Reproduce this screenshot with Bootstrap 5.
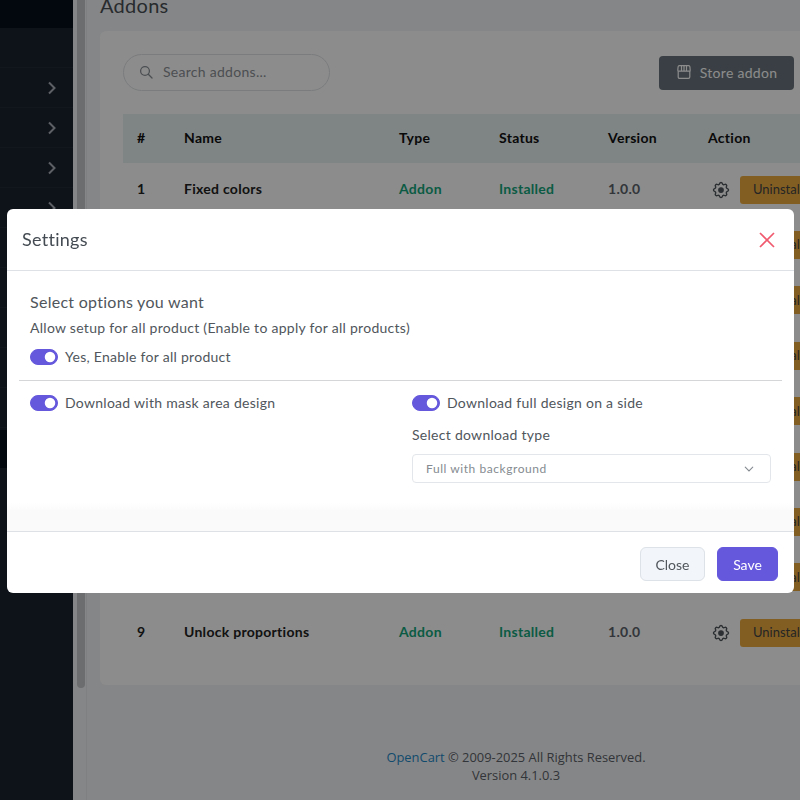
<!DOCTYPE html>
<html lang="en">
<head>
  <meta charset="UTF-8">
  <meta name="viewport" content="width=device-width, initial-scale=1">
  <title>Addons</title>
  <link href="https://cdn.jsdelivr.net/npm/bootstrap@5.3.2/dist/css/bootstrap.min.css" rel="stylesheet">
  <style>
    html, body { height: 800px; overflow: hidden; }
    body { font-family: "Lato", "Liberation Sans", sans-serif; letter-spacing: .28px; background: #f3f5f7; color: #3c4248; }

    .side-panel { width: 73px; height: 800px; background: #1a2330; }
    .side-top { height: 28px; background: #060d1b; }
    .side-row { height: 40px; border-bottom: 1px solid #212b38; padding-right: 16px; }
    .side-row.is-active { height: 38px; margin-top: 2px; background: #060d1b; border: 0; }

    .scroll-rail { width: 14px; height: 800px; background: #f3f5f7; border-right: 1px solid #e6e9ec; padding-left: 4px; }
    .scroll-thumb { width: 8px; height: 688px; background: #c4c6c8; border-radius: 0 0 4px 4px; }

    .page-main { padding-left: 13px; min-width: 0; }
    .page-title { font-size: 20px; font-weight: 400; line-height: 24px; margin: -7px 0 14px; color: #4a4f55; }

    .addon-card { width: 760px; height: 654px; background: #fff; border-radius: 6px; padding: 23px 0 0 23px; }
    .addon-tools { width: 671px; }
    .addon-search { width: 207px; height: 37px; border: 1px solid #dfe2e5; border-radius: 19px; padding: 0 0 2px 15px; font-size: 14px; color: #8b9096; }
    .addon-search span { margin-left: 2px; }
    .store-btn { width: 135px; height: 34px; margin: 2px 0 0 auto; padding-bottom: 2px; background: #69747c; color: #fff; border-radius: 4px; font-size: 14px; }

    .addon-table { width: 737px; margin-top: 23px; font-size: 14px; }
    .addon-head { height: 49px; margin-bottom: -1px; background: #e7f0f2; color: #111; font-weight: 700; padding-bottom: 3px; }
    .addon-row { height: 55.4px; font-weight: 700; color: #222; }
    .addon-row > div:not(.uninstall-btn) { padding-bottom: 2px; }
    .col-num { flex: none; width: 61px; padding-left: 14px; }
    .col-name { flex: none; width: 215px; }
    .col-type { flex: none; width: 100px; }
    .col-status { flex: none; width: 109px; }
    .col-ver { flex: none; width: 100px; }
    .is-green { color: #14a77c; }
    .is-muted { color: #5c636a; }
    .gear-icon { flex: none; margin-left: 3px; }
    .uninstall-btn { height: 28px; width: 90px; margin-left: 9px; padding-left: 13px; background: #eeac40; color: #444; border-radius: 3px; font-size: 13px; font-weight: 400; letter-spacing: 0; display: flex; align-items: center; flex: none; }

    .page-foot { width: 832px; margin-top: 63px; font-family: "Open Sans", sans-serif; letter-spacing: 0; font-size: 12.9px; line-height: 18px; text-align: center; color: #5c6168; }
    .page-foot a { color: #1e88c7; text-decoration: none; }

    .modal-backdrop.show { opacity: .45; }
    .settings-dialog { max-width: 787px; width: 787px; margin: 209px 0 0 7px; }
    .settings-box { height: 384px; border: 0; border-radius: 6px; }
    .settings-box .modal-header { height: 62px; padding: 0 15px; border-bottom: 1px solid #dee2e6; }
    .settings-box .modal-title { font-size: 18px; font-weight: 400; color: #444b52; }
    .settings-box .modal-body { padding: 0; flex: none; height: 260px; font-size: 14px; color: #50565c; background: linear-gradient(to bottom, #fff 232px, #fafafa 240px); }
    .settings-box .modal-footer { height: 62px; padding: 3px 16px 0 0; border-top: 1px solid #dee2e6; gap: 12px; }
    .settings-box .modal-footer > * { margin: 0; }

    .opts-top { padding: 21px 23px 0; }
    .opts-heading { font-size: 16px; line-height: 20px; margin: 0 0 6px; color: #50565c; }
    .opts-line { line-height: 20px; margin: 0 0 9px; }
    .opts-switch { display: flex; align-items: center; gap: 7px; margin: 0; padding: 0; min-height: 0; line-height: 20px; }
    .opts-switch .form-check-input { width: 28px; height: 16px; margin: 0; background-color: #6558dc; border-color: #6558dc; flex-shrink: 0; }
    .opts-rule { margin: 13px 12px 12px; border-color: #d4d6d8; opacity: 1; }
    .opts-cols { padding-left: 23px; }
    .opts-left { width: 382px; }
    .opts-right { width: 359px; }
    .opts-label { line-height: 20px; margin: 12px 0 9px; }
    .opts-select { width: 359px; height: 29px; font-size: 12px; letter-spacing: .56px; color: #858b91; padding: 0 14px 0 13px; border-color: #e3e6ea; border-radius: 4px; background-image: url("data:image/svg+xml,%3csvg xmlns='http://www.w3.org/2000/svg' viewBox='0 0 16 16'%3e%3cpath fill='none' stroke='%23858b91' stroke-linecap='round' stroke-width='1.5' d='M3 5.5l5 5 5-5'/%3e%3c/svg%3e"); background-position: right 15px center; background-size: 12px 12px; }
    .close-btn { width: 65px; height: 34px; padding: 0; font-size: 14px; background: #f2f5f9; border: 1px solid #dde2e8; color: #50565c; }
    .save-btn { width: 61px; height: 34px; padding: 0; font-size: 14px; background: #6558dc; border: 1px solid #6558dc; color: #fff; }
    .x-btn { background: none; border: 0; padding: 0; margin-right: 4px; line-height: 0; }
  </style>
</head>
<body>

<div class="d-flex">
  <aside class="side-panel flex-shrink-0" id="side"></aside>
  <div class="scroll-rail flex-shrink-0"><div class="scroll-thumb"></div></div>

  <main class="page-main flex-grow-1">
    <h1 class="page-title">Addons</h1>
    <div class="addon-card">
      <div class="addon-tools d-flex">
        <div class="addon-search d-flex align-items-center gap-2">
          <svg width="14" height="14" viewBox="0 0 14 14" fill="none" stroke="#8b9096" stroke-width="1.3" stroke-linecap="round"><circle cx="6" cy="6" r="4.4"/><path d="M9.3 9.3L13 13"/></svg>
          <span>Search addons...</span>
        </div>
        <div class="store-btn d-flex align-items-center justify-content-center gap-2">
          <svg width="16" height="16" viewBox="0 0 16 16" fill="none" stroke="#fff" stroke-width="1.2" stroke-linejoin="round"><path d="M2.2 7v6a1.4 1.4 0 0 0 1.4 1.4h8.8a1.4 1.4 0 0 0 1.4-1.4V7"/><path d="M3.4 1.6h9.2a1.3 1.3 0 0 1 1.3 1.2l.3 3.4a1 1 0 0 1-1 1H2.8a1 1 0 0 1-1-1l.3-3.4a1.3 1.3 0 0 1 1.3-1.2z"/><path d="M5.5 1.6V7M8 1.6V7M10.5 1.6V7"/></svg>
          <span>Store addon</span>
        </div>
      </div>
      <div class="addon-table" id="rows">
        <div class="addon-head d-flex align-items-center">
          <div class="col-num">#</div>
          <div class="col-name">Name</div>
          <div class="col-type">Type</div>
          <div class="col-status">Status</div>
          <div class="col-ver">Version</div>
          <div>Action</div>
        </div>
      </div>
    </div>
    <div class="page-foot">
      <div><a href="#">OpenCart</a> © 2009-2025 All Rights Reserved.</div>
      <div>Version 4.1.0.3</div>
    </div>
  </main>
</div>

<div class="modal-backdrop fade show"></div>

<div class="modal d-block" tabindex="-1">
  <div class="modal-dialog settings-dialog">
    <div class="modal-content settings-box">
      <div class="modal-header">
        <h5 class="modal-title">Settings</h5>
        <button type="button" class="x-btn ms-auto" aria-label="Close">
          <svg width="16" height="16" viewBox="0 0 16 16" fill="none" stroke="#f0596e" stroke-width="1.7"><path d="M1 1l14 14M15 1L1 15"/></svg>
        </button>
      </div>
      <div class="modal-body">
        <div class="opts-top">
          <p class="opts-heading">Select options you want</p>
          <p class="opts-line">Allow setup for all product (Enable to apply for all products)</p>
          <label class="opts-switch form-check form-switch">
            <input class="form-check-input" type="checkbox" role="switch" checked>
            <span>Yes, Enable for all product</span>
          </label>
        </div>
        <hr class="opts-rule">
        <div class="opts-cols d-flex">
          <div class="opts-left">
            <label class="opts-switch form-check form-switch">
              <input class="form-check-input" type="checkbox" role="switch" checked>
              <span>Download with mask area design</span>
            </label>
          </div>
          <div class="opts-right">
            <label class="opts-switch form-check form-switch">
              <input class="form-check-input" type="checkbox" role="switch" checked>
              <span>Download full design on a side</span>
            </label>
            <div class="opts-label">Select download type</div>
            <select class="form-select opts-select">
              <option>Full with background</option>
            </select>
          </div>
        </div>
      </div>
      <div class="modal-footer">
        <button type="button" class="btn close-btn">Close</button>
        <button type="button" class="btn save-btn">Save</button>
      </div>
    </div>
  </div>
</div>

<script>
// sidebar rows, the chevrons sit at y 88, 127, 167, 206...
const side = document.getElementById('side');
let sideHtml = '<div class="side-top"></div>';
const chevron = '<svg width="10" height="14" viewBox="0 0 10 14" fill="none" stroke="#aab0b8" stroke-width="2"><path d="M2 1.5L7.5 7L2 12.5"/></svg>';
for (let i = 0; i < 10; i++) {
  sideHtml += `<div class="side-row d-flex align-items-center justify-content-end">${i > 0 ? chevron : ''}</div>`;
}
sideHtml += '<div class="side-row is-active"></div>';
side.innerHTML = sideHtml;

const gear = '<svg class="gear-icon" width="20" height="20" viewBox="0 0 24 24" fill="none" stroke="#50565c" stroke-width="1.7" stroke-linecap="round" stroke-linejoin="round"><path d="M10.325 4.317c.426 -1.756 2.924 -1.756 3.35 0a1.724 1.724 0 0 0 2.573 1.066c1.543 -.94 3.31 .826 2.37 2.37a1.724 1.724 0 0 0 1.065 2.572c1.756 .426 1.756 2.924 0 3.35a1.724 1.724 0 0 0 -1.066 2.573c.94 1.543 -.826 3.31 -2.37 2.37a1.724 1.724 0 0 0 -2.572 1.065c-.426 1.756 -2.924 1.756 -3.35 0a1.724 1.724 0 0 0 -2.573 -1.066c-1.543 .94 -3.31 -.826 -2.37 -2.37a1.724 1.724 0 0 0 -1.065 -2.572c-1.756 -.426 -1.756 -2.924 0 -3.35a1.724 1.724 0 0 0 1.066 -2.573c-.94 -1.543 .826 -3.31 2.37 -2.37c1 .608 2.296 .07 2.572 -1.065z"/><circle cx="12" cy="12" r="2.6" fill="#50565c"/></svg>';

// only rows 1 and 9 show past the modal, the others are just their button edge
const items = { 1: 'Fixed colors', 9: 'Unlock proportions' };
const rows = document.getElementById('rows');
for (let n = 1; n <= 9; n++) {
  const row = document.createElement('div');
  row.className = 'addon-row d-flex align-items-center';
  const shown = items[n];
  row.innerHTML = `
    <div class="col-num">${shown ? n : ''}</div>
    <div class="col-name">${shown || ''}</div>
    <div class="col-type is-green">${shown ? 'Addon' : ''}</div>
    <div class="col-status is-green">${shown ? 'Installed' : ''}</div>
    <div class="col-ver is-muted">${shown ? '1.0.0' : ''}</div>
    ${gear}
    <div class="uninstall-btn">Uninstall</div>`;
  rows.appendChild(row);
}
</script>

<script src="https://cdn.jsdelivr.net/npm/bootstrap@5.3.2/dist/js/bootstrap.bundle.min.js"></script>
</body>
</html>
